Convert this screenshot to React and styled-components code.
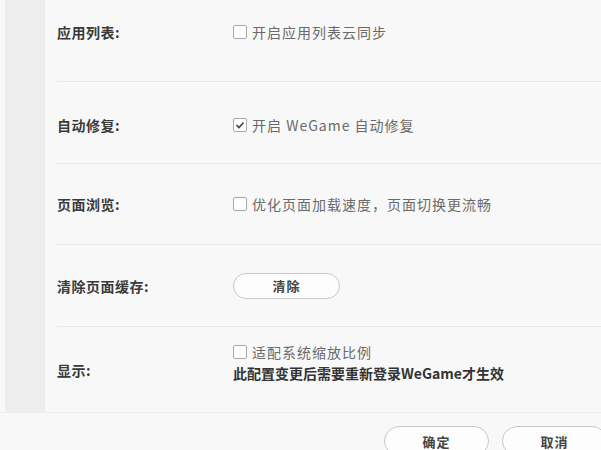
import React from 'react'
import styled, { createGlobalStyle } from 'styled-components'

const GlobalStyle = createGlobalStyle`
  html, body {
    margin: 0;
    padding: 0;
    background: #f8f8f8;
  }
  body {
    font-family: "Noto Sans CJK SC", "Noto Sans", sans-serif;
  }
`

const Window = styled.div`
  width: 601px;
  height: 450px;
  display: flex;
  flex-direction: column;
  background: #f8f8f8;
  overflow: hidden;
`

const Body = styled.div`
  display: flex;
  height: 412px;
  flex-shrink: 0;
`

const Sidebar = styled.div`
  width: 40px;
  margin-left: 5px;
  background: #ededed;
`

const Content = styled.div`
  flex: 1;
  padding-left: 12px;
  display: flex;
  flex-direction: column;
`

const Row = styled.div`
  display: grid;
  grid-template-columns: 176px 1fr;
  align-items: center;
  height: ${p => p.$h}px;
  padding-bottom: ${p => p.$pb || 0}px;
  padding-top: ${p => p.$pt || 0}px;
  box-sizing: border-box;
  border-bottom: ${p => (p.$last ? 'none' : '1px solid #e9e9e9')};
`

const Label = styled.div`
  font-size: 14px;
  font-weight: bold;
  color: #3a3a3a;
  letter-spacing: 0.5px;
  align-self: ${p => (p.$top ? 'start' : 'center')};
  margin-top: ${p => p.$mt || 0}px;
`

const Field = styled.div`
  display: flex;
  flex-direction: column;
  gap: 1px;
  align-self: start;
  margin-top: ${p => p.$mt || 0}px;
`

const Option = styled.label`
  display: flex;
  align-items: center;
  gap: 5px;
  font-size: 14px;
  line-height: 20px;
  color: #6a6a6a;
  letter-spacing: 1px;
`

const Box = styled.span`
  width: 14px;
  height: 14px;
  box-sizing: border-box;
  border: 1px solid #a9a9a9;
  border-radius: 2px;
  background: #fff;
  display: inline-flex;
  align-items: center;
  justify-content: center;
`

const Note = styled.div`
  font-size: 14px;
  line-height: 20px;
  font-weight: bold;
  color: #333;
`

const Pill = styled.button`
  width: ${p => p.$w || 107}px;
  height: ${p => p.$ht || 26}px;
  border: 1px solid #c8c8c8;
  border-radius: 15px;
  background: #fdfdfd;
  font-family: inherit;
  font-size: 13px;
  font-weight: bold;
  color: #444;
  padding: 0;
  letter-spacing: 1px;
  flex-shrink: 0;
`

const Footer = styled.div`
  flex: 1;
  border-top: 1px solid #ececec;
  display: flex;
  justify-content: flex-end;
  align-items: flex-start;
  gap: 13px;
  padding-top: 13px;
  margin-right: -6px;
`

const Check = ({ checked, children }) => (
  <Option>
    <Box>
      {checked && (
        <svg width="10" height="10" viewBox="0 0 10 10">
          <path d="M1.5 5.2 L4 7.5 L8.5 2.5" fill="none" stroke="#444" strokeWidth="1.6" />
        </svg>
      )}
    </Box>
    {children}
  </Option>
)

export default function App() {
  return (
    <Window>
      <GlobalStyle />
      <Body>
        <Sidebar />
        <Content>
          <Row $h={82} $pb={18}>
            <Label>应用列表:</Label>
            <Check>开启应用列表云同步</Check>
          </Row>
          <Row $h={82} $pt={4}>
            <Label>自动修复:</Label>
            <Check checked>开启 WeGame 自动修复</Check>
          </Row>
          <Row $h={81}>
            <Label>页面浏览:</Label>
            <Check>优化页面加载速度，页面切换更流畅</Check>
          </Row>
          <Row $h={82}>
            <Label>清除页面缓存:</Label>
            <div><Pill>清除</Pill></div>
          </Row>
          <Row $h={85} $last>
            <Label>显示:</Label>
            <Field $mt={15}>
              <Check>适配系统缩放比例</Check>
              <Note>此配置变更后需要重新登录WeGame才生效</Note>
            </Field>
          </Row>
        </Content>
      </Body>
      <Footer>
        <Pill $w={105} $ht={30}>确定</Pill>
        <Pill $w={105} $ht={30}>取消</Pill>
      </Footer>
    </Window>
  )
}
